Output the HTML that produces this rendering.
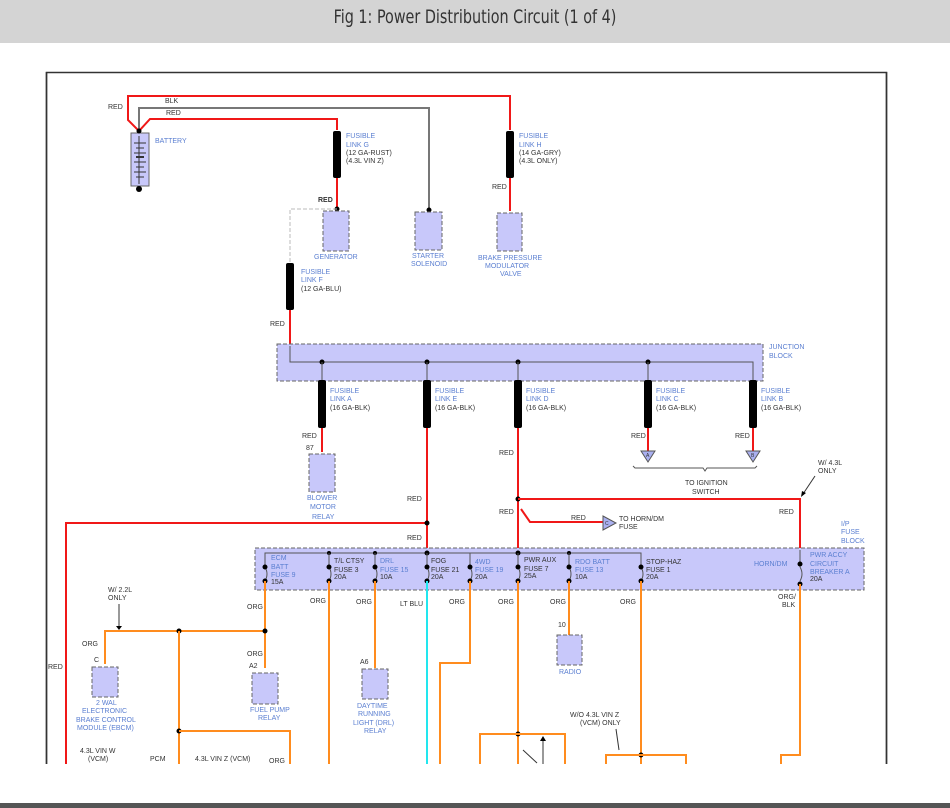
<!DOCTYPE html>
<html><head><meta charset="utf-8"><style>
html,body{margin:0;padding:0;width:950px;height:808px;overflow:hidden;background:#fff;font-family:"Liberation Sans",sans-serif}
.hdr{position:absolute;left:0;top:0;width:950px;height:43px;background:#d4d4d4;}
.hdr span{position:absolute;left:0;width:950px;top:0;text-align:center;font-size:19px;line-height:34px;color:#333;font-family:"DejaVu Sans Condensed","Liberation Sans",sans-serif;transform:scaleX(0.84);transform-origin:475px 0}
.bot{position:absolute;left:0;top:803px;width:950px;height:5px;background:#555}
svg{position:absolute;left:0;top:0}
text{font-family:"Liberation Sans",sans-serif;font-size:7px;fill:#333}
.b{fill:#5b7fd1}
.r{stroke:#f01818;stroke-width:2;fill:none}
.o{stroke:#ff8c1e;stroke-width:2;fill:none}
.g{stroke:#777;stroke-width:2;fill:none}
.box{fill:#c8c8fa;stroke:#666;stroke-dasharray:4 2;stroke-width:1}
.fl{fill:#000}
</style></head><body>
<div class="hdr"><span>Fig 1: Power Distribution Circuit (1 of 4)</span></div>
<svg width="950" height="808" viewBox="0 0 950 808">
<rect x="46.5" y="72.5" width="840" height="700" fill="none" stroke="#333" stroke-width="1.5"/>
<rect x="0" y="764" width="950" height="39" fill="#fff"/>
<line x1="46.5" y1="72" x2="46.5" y2="764" stroke="#333" stroke-width="1.5"/>
<line x1="886.5" y1="72" x2="886.5" y2="764" stroke="#333" stroke-width="1.5"/>
<path class="r" d="M139 131 L128 120 L128 96 L510 96 L510 130"/>
<path class="g" d="M139 131 L139 108 L429 108 L429 210"/>
<path class="r" d="M139 131 L150 119 L337 119 L337 130"/>
<text x="108" y="109">RED</text><text x="165" y="103">BLK</text><text x="166" y="115">RED</text>
<rect class="box" x="131" y="133" width="18" height="53" style="stroke-dasharray:none"/>
<g stroke="#333" stroke-width="1"><line x1="134" y1="143" x2="146" y2="143"/><line x1="136" y1="148" x2="144" y2="148"/><line x1="134" y1="153" x2="146" y2="153"/><line x1="136" y1="157" x2="144" y2="157" stroke-width="2"/><line x1="134" y1="162" x2="146" y2="162"/><line x1="136" y1="167" x2="144" y2="167"/><line x1="134" y1="172" x2="146" y2="172"/><line x1="136" y1="177" x2="144" y2="177"/><line x1="139" y1="136" x2="139" y2="184"/></g>
<circle cx="139" cy="131" r="2.5"/><circle cx="139" cy="189" r="3"/>
<text class="b" x="155" y="143">BATTERY</text>
<rect class="fl" x="333" y="131" width="8" height="47" rx="2"/>
<text class="b" x="346" y="138">FUSIBLE</text><text class="b" x="346" y="147">LINK G</text><text x="346" y="155">(12 GA-RUST)</text><text x="346" y="163">(4.3L VIN Z)</text>
<path class="r" d="M337 178 L337 209"/><circle cx="337" cy="209" r="2.5"/>
<text x="318" y="202" style="font-weight:bold">RED</text>
<path d="M337 209 L290 209 L290 262" stroke="#bbb" stroke-dasharray="4 2" fill="none"/>
<rect class="box" x="323" y="211" width="26" height="40"/>
<text class="b" x="314" y="259">GENERATOR</text>
<circle cx="429" cy="210" r="2.5"/>
<rect class="box" x="415" y="212" width="27" height="38"/>
<text class="b" x="412" y="258">STARTER</text><text class="b" x="411" y="266">SOLENOID</text>
<rect class="fl" x="506" y="131" width="8" height="47" rx="2"/>
<text class="b" x="519" y="138">FUSIBLE</text><text class="b" x="519" y="147">LINK H</text><text x="519" y="155">(14 GA-GRY)</text><text x="519" y="163">(4.3L ONLY)</text>
<path class="r" d="M510 178 L510 211"/><text x="492" y="189">RED</text>
<rect class="box" x="497" y="213" width="25" height="38"/>
<text class="b" x="478" y="260">BRAKE PRESSURE</text><text class="b" x="485" y="268">MODULATOR</text><text class="b" x="500" y="276">VALVE</text>
<rect class="fl" x="286" y="263" width="8" height="47" rx="2"/>
<text class="b" x="301" y="274">FUSIBLE</text><text class="b" x="301" y="282">LINK F</text><text x="301" y="291">(12 GA-BLU)</text>
<path class="r" d="M290 310 L290 344"/><text x="270" y="326">RED</text>
<rect class="box" x="277" y="344" width="486" height="37"/>
<text class="b" x="769" y="349">JUNCTION</text><text class="b" x="769" y="358">BLOCK</text>
<path d="M290 346 L290 362 L753 362 L753 381" stroke="#555" fill="none"/>
<g fill="#000"><circle cx="322" cy="362" r="2.5"/><circle cx="427" cy="362" r="2.5"/><circle cx="518" cy="362" r="2.5"/><circle cx="648" cy="362" r="2.5"/></g>
<g stroke="#555"><line x1="322" y1="362" x2="322" y2="381"/><line x1="427" y1="362" x2="427" y2="381"/><line x1="518" y1="362" x2="518" y2="381"/><line x1="648" y1="362" x2="648" y2="381"/></g>
<g class="fl"><rect x="318" y="380" width="8" height="48" rx="2"/><rect x="423" y="380" width="8" height="48" rx="2"/><rect x="514" y="380" width="8" height="48" rx="2"/><rect x="644" y="380" width="8" height="48" rx="2"/><rect x="749" y="380" width="8" height="48" rx="2"/></g>
<text class="b" x="330" y="393">FUSIBLE</text><text class="b" x="330" y="401">LINK A</text><text x="330" y="410">(16 GA-BLK)</text>
<text class="b" x="435" y="393">FUSIBLE</text><text class="b" x="435" y="401">LINK E</text><text x="435" y="410">(16 GA-BLK)</text>
<text class="b" x="526" y="393">FUSIBLE</text><text class="b" x="526" y="401">LINK D</text><text x="526" y="410">(16 GA-BLK)</text>
<text class="b" x="656" y="393">FUSIBLE</text><text class="b" x="656" y="401">LINK C</text><text x="656" y="410">(16 GA-BLK)</text>
<text class="b" x="761" y="393">FUSIBLE</text><text class="b" x="761" y="401">LINK B</text><text x="761" y="410">(16 GA-BLK)</text>
<path class="r" d="M322 428 L322 452"/><text x="302" y="438">RED</text><text x="306" y="450">87</text>
<rect class="box" x="309" y="454" width="26" height="38"/>
<text class="b" x="307" y="500">BLOWER</text><text class="b" x="310" y="509">MOTOR</text><text class="b" x="312" y="519">RELAY</text>
<path class="r" d="M648 428 L648 451"/><text x="631" y="438">RED</text>
<path class="r" d="M753 428 L753 451"/><text x="735" y="438">RED</text>
<path d="M641 451 L655 451 L648 462 Z M746 451 L760 451 L753 462 Z" fill="#aab0f0" stroke="#555"/>
<text x="646" y="457" style="font-size:5px">A</text><text x="751" y="457" style="font-size:5px">B</text>
<path d="M633 466 L635 468 L703 468 L705 471 L707 468 L755 468 L757 466" stroke="#555" fill="none"/>
<text x="685" y="485">TO IGNITION</text><text x="692" y="494">SWITCH</text>
<path class="r" d="M427 428 L427 550"/><text x="407" y="501">RED</text><text x="407" y="540">RED</text>
<path class="r" d="M66 764 L66 523 L427 523"/><circle cx="427" cy="523" r="2.5"/><text x="48" y="669">RED</text>
<path class="r" d="M518 428 L518 550"/><text x="499" y="455">RED</text><text x="499" y="514">RED</text>
<circle cx="518" cy="499" r="2.5"/>
<path class="r" d="M518 499 L800 499 L800 550"/>
<path class="r" d="M521 509 L530 522 L603 522"/><text x="571" y="520">RED</text>
<path d="M603 516 L603 530 L616 523 Z" fill="#aab0f0" stroke="#555"/><text x="605" y="525" style="font-size:5px">C</text>
<text x="619" y="521">TO HORN/DM</text><text x="619" y="529">FUSE</text>
<text x="779" y="514">RED</text>
<text x="818" y="465">W/ 4.3L</text><text x="818" y="473">ONLY</text>
<path d="M815 476 L803 494" stroke="#333"/><path d="M801 497 L802 491 L806 493 Z"/>
<text class="b" x="841" y="526">I/P</text><text class="b" x="841" y="534">FUSE</text><text class="b" x="841" y="543">BLOCK</text>
<rect class="box" x="255" y="548" width="609" height="42"/>
<path d="M265 567 L265 553 L641 553 L641 567" stroke="#555" fill="none"/>
<g fill="#000"><circle cx="329" cy="553" r="2"/><circle cx="375" cy="553" r="2"/><circle cx="427" cy="553" r="2.5"/><circle cx="518" cy="553" r="2.5"/><circle cx="569" cy="553" r="2"/></g>
<g stroke="#555" fill="none">
<path d="M329 553V567M375 553V567M427 553V567M518 553V567M569 553V567M470 553V567"/>
<path d="M265 567q4 7 0 14M329 567q4 7 0 14M375 567q4 7 0 14M427 567q4 7 0 14M470 567q4 7 0 14M518 567q4 7 0 14M569 567q4 7 0 14M641 567q4 7 0 14M800 567q4 7 0 14"/>
<path d="M800 550V567"/></g>
<g fill="#000"><circle cx="265" cy="567" r="2.5"/><circle cx="265" cy="581" r="2.5"/><circle cx="329" cy="567" r="2.5"/><circle cx="329" cy="581" r="2.5"/><circle cx="375" cy="567" r="2.5"/><circle cx="375" cy="581" r="2.5"/><circle cx="427" cy="567" r="2.5"/><circle cx="427" cy="581" r="2.5"/><circle cx="470" cy="567" r="2.5"/><circle cx="470" cy="581" r="2.5"/><circle cx="518" cy="567" r="2.5"/><circle cx="518" cy="581" r="2.5"/><circle cx="569" cy="567" r="2.5"/><circle cx="569" cy="581" r="2.5"/><circle cx="641" cy="567" r="2.5"/><circle cx="641" cy="581" r="2.5"/><circle cx="800" cy="564" r="2.5"/><circle cx="800" cy="584" r="2.5"/></g>
<text class="b" x="271" y="560">ECM</text><text class="b" x="271" y="569">BATT</text><text class="b" x="271" y="577">FUSE 9</text><text x="271" y="584">15A</text>
<text x="334" y="563">T/L CTSY</text><text x="334" y="572">FUSE 3</text><text x="334" y="579">20A</text>
<text class="b" x="380" y="563">DRL</text><text class="b" x="380" y="572">FUSE 15</text><text x="380" y="579">10A</text>
<text x="431" y="563">FOG</text><text x="431" y="572">FUSE 21</text><text x="431" y="579">20A</text>
<text class="b" x="475" y="564">4WD</text><text class="b" x="475" y="572">FUSE 19</text><text x="475" y="579">20A</text>
<text x="524" y="562">PWR AUX</text><text x="524" y="571">FUSE 7</text><text x="524" y="578">25A</text>
<text class="b" x="575" y="564">RDO BATT</text><text class="b" x="575" y="572">FUSE 13</text><text x="575" y="579">10A</text>
<text x="646" y="564">STOP-HAZ</text><text x="646" y="572">FUSE 1</text><text x="646" y="579">20A</text>
<text class="b" x="754" y="566">HORN/DM</text>
<text class="b" x="810" y="557">PWR ACCY</text><text class="b" x="810" y="566">CIRCUIT</text><text class="b" x="810" y="574">BREAKER A</text><text x="810" y="581">20A</text>
<path class="o" d="M265 581 V668"/><path class="o" d="M105 664 V631 H265"/><circle cx="265" cy="631" r="2.5"/><circle cx="179" cy="631" r="2.5"/>
<path class="o" d="M179 631 V764"/><circle cx="179" cy="731" r="2.5"/><path class="o" d="M179 731 H290 V764"/>
<text x="247" y="609">ORG</text><text x="82" y="646">ORG</text><text x="247" y="656">ORG</text>
<text x="108" y="592">W/ 2.2L</text><text x="108" y="600">ONLY</text><path d="M119 604 V627" stroke="#333"/><path d="M116 626 L122 626 L119 630Z"/>
<text x="94" y="662">C</text><text x="249" y="668">A2</text>
<rect class="box" x="92" y="667" width="26" height="30"/>
<text class="b" x="96" y="705">2 WAL</text><text class="b" x="82" y="713">ELECTRONIC</text><text class="b" x="76" y="722">BRAKE CONTROL</text><text class="b" x="77" y="730">MODULE (EBCM)</text>
<rect class="box" x="252" y="673" width="26" height="31"/>
<text class="b" x="250" y="712">FUEL PUMP</text><text class="b" x="258" y="720">RELAY</text>
<text x="80" y="753">4.3L VIN W</text><text x="88" y="761">(VCM)</text><text x="150" y="761">PCM</text><text x="195" y="761">4.3L VIN Z (VCM)</text><text x="269" y="763">ORG</text>
<path class="o" d="M329 581 V764"/><text x="310" y="603">ORG</text>
<path class="o" d="M375 581 V668"/><text x="356" y="604">ORG</text><text x="360" y="664">A6</text>
<rect class="box" x="362" y="669" width="26" height="30"/>
<text class="b" x="357" y="708">DAYTIME</text><text class="b" x="358" y="716">RUNNING</text><text class="b" x="353" y="725">LIGHT (DRL)</text><text class="b" x="364" y="733">RELAY</text>
<path d="M427 581 V764" stroke="#22e6ee" stroke-width="2"/><text x="400" y="606">LT BLU</text>
<path class="o" d="M470 581 V663 H440 V764"/><text x="449" y="604">ORG</text>
<path class="o" d="M518 581 V764"/><circle cx="518" cy="734" r="2.5"/><path class="o" d="M480 764 V734 H565 V764"/><text x="498" y="604">ORG</text>
<path d="M543 764 V740" stroke="#333"/><path d="M540 741 L546 741 L543 736Z"/><path d="M537 763 L523 750" stroke="#333"/>
<path class="o" d="M569 581 V636"/><text x="550" y="604">ORG</text><text x="558" y="627">10</text>
<rect class="box" x="557" y="635" width="25" height="30"/><text class="b" x="559" y="674">RADIO</text>
<path class="o" d="M641 581 V764"/><circle cx="641" cy="755" r="2.5"/><path class="o" d="M606 764 V755 H686 V764"/><text x="620" y="604">ORG</text>
<text x="570" y="717">W/O 4.3L VIN Z</text><text x="580" y="725">(VCM) ONLY</text><path d="M616 729 L619 750" stroke="#333"/>
<path d="M800 584 V755 H781 V764" stroke="#ff8c1e" stroke-width="2" fill="none"/><text x="778" y="599">ORG/</text><text x="782" y="607">BLK</text>
</svg>
<div class="bot"></div>
</body></html>
